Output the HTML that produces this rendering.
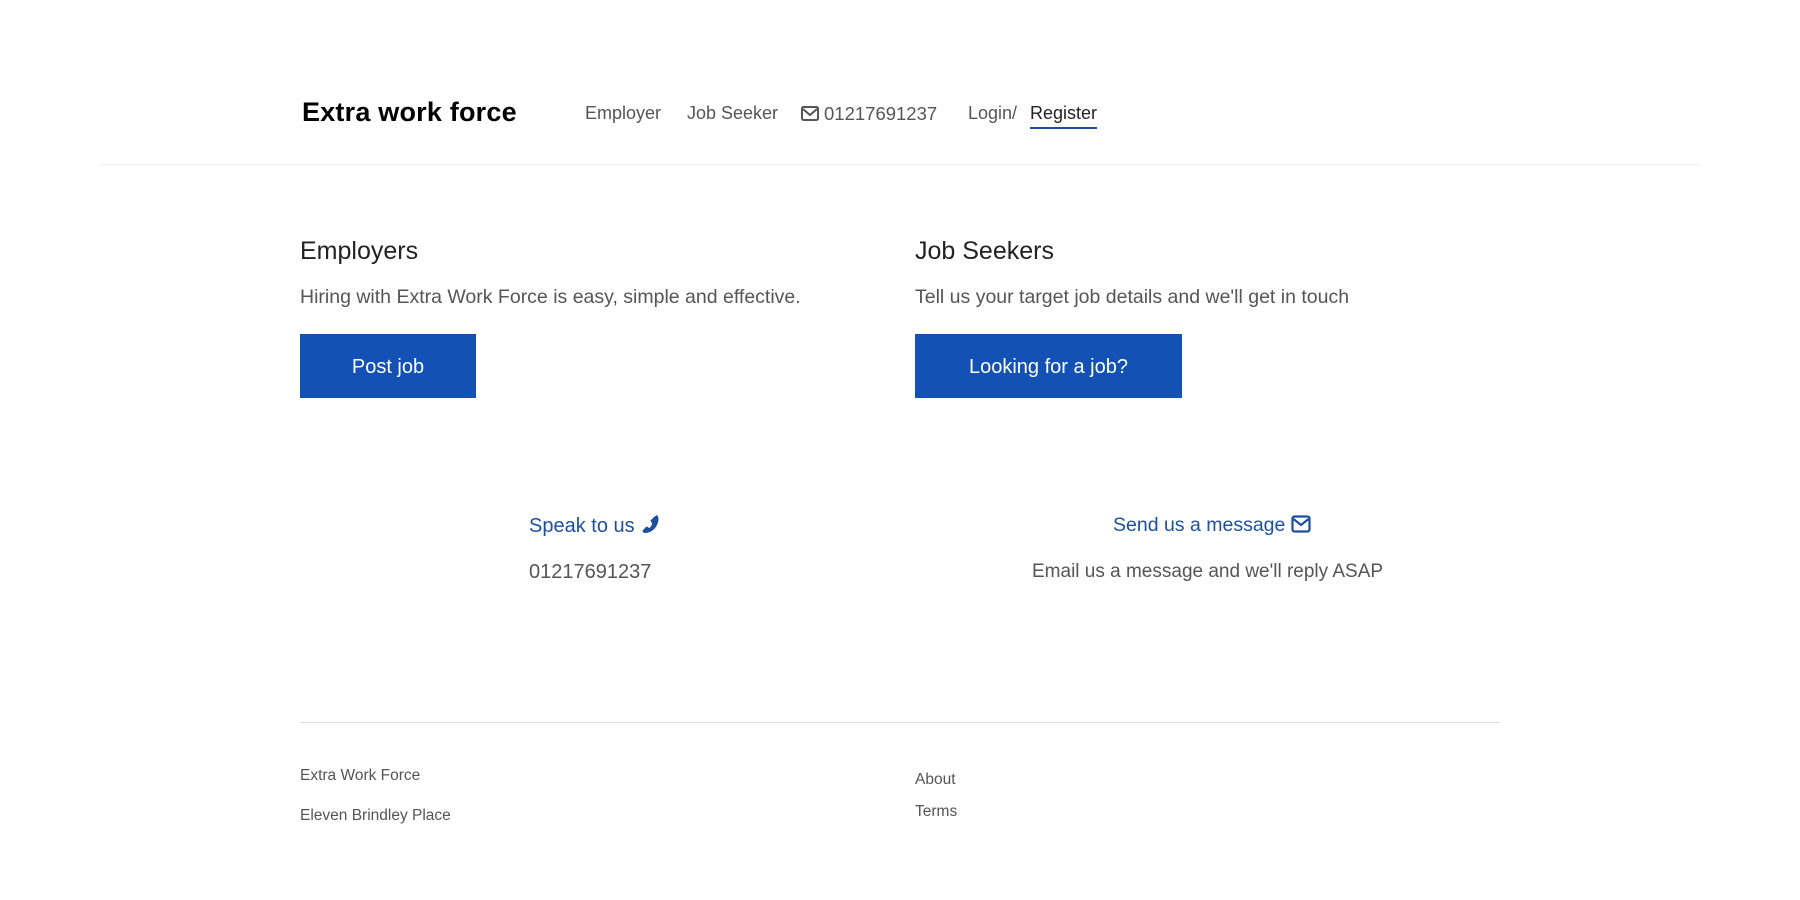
<!DOCTYPE html>
<html><head><meta charset="utf-8"><style>
body{margin:0;width:1800px;height:900px;background:#fff;font-family:"Liberation Sans",sans-serif;position:relative;overflow:hidden;color:#555}
.a{position:absolute;white-space:nowrap}
.logo{left:302px;top:97px;font-size:27px;font-weight:bold;color:#000;letter-spacing:0.2px}
.nav{top:103px;font-size:18px;color:#555}
.btn{position:absolute;top:334px;height:64px;background:#1351b4;color:#fff;font-size:20px;display:flex;align-items:center;justify-content:center;padding-top:3px;box-sizing:border-box}
h2{position:absolute;margin:0;font-weight:normal;font-size:25px;color:#222;top:237px}
.p{top:286px;font-size:19.5px;color:#555}
.link{color:#1d4f9e;font-size:20px;top:514px}
.ft{font-size:15.5px;color:#555}
</style></head><body>
<div class="a logo">Extra work force</div>
<div class="a nav" style="left:585px">Employer</div>
<div class="a nav" style="left:687px">Job Seeker</div>
<svg class="a" style="left:801px;top:106px" width="18" height="15" viewBox="0 0 18 15"><rect x="1" y="1" width="16" height="13" rx="1.5" fill="none" stroke="#555" stroke-width="2"/><path d="M2 3 L9 9 L16 3" fill="none" stroke="#555" stroke-width="2"/></svg>
<div class="a nav" style="left:824px;font-size:18.5px">01217691237</div>
<div class="a nav" style="left:968px">Login/</div>
<div class="a nav" style="left:1030px;color:#222">Register</div>
<div class="a" style="left:1030px;top:127px;width:67px;height:2px;background:#1d4f9e"></div>
<div class="a" style="left:100px;top:164px;width:1600px;height:1px;background:#eee"></div>

<h2 style="left:300px">Employers</h2>
<h2 style="left:915px">Job Seekers</h2>
<div class="a p" style="left:300px">Hiring with Extra Work Force is easy, simple and effective.</div>
<div class="a p" style="left:915px">Tell us your target job details and we'll get in touch</div>
<div class="btn" style="left:300px;width:176px">Post job</div>
<div class="btn" style="left:915px;width:267px">Looking for a job?</div>

<div class="a link" style="left:529px">Speak to us <svg width="20" height="20" viewBox="0 0 20 20" style="vertical-align:-2px"><path d="M17 1 C19 3 19 7 17 11 C14 17 9 19 5 19 C3 19 2 17 3 16 L6 13 C7 12 8 13 9 14 C11 13 12 11 12 9 C11 8 10 7 11 6 L14 3 Z" fill="#1d4f9e"/></svg></div>
<div class="a" style="left:529px;top:561px;font-size:20px;color:#555">01217691237</div>
<div class="a link" style="left:1113px;font-size:19.5px">Send us a message <svg width="20" height="18" viewBox="0 0 20 18" style="vertical-align:-2px"><rect x="1.5" y="1.5" width="17" height="15" rx="2" fill="none" stroke="#1d4f9e" stroke-width="2.2"/><path d="M2.5 4 L10 10 L17.5 4" fill="none" stroke="#1d4f9e" stroke-width="2.2"/></svg></div>
<div class="a" style="left:1032px;top:561px;font-size:19px;color:#555">Email us a message and we'll reply ASAP</div>

<div class="a" style="left:300px;top:722px;width:1200px;height:1px;background:#ddd"></div>
<div class="a ft" style="left:300px;top:767px">Extra Work Force</div>
<div class="a ft" style="left:300px;top:807px">Eleven Brindley Place</div>
<div class="a ft" style="left:915px;top:771px">About</div>
<div class="a ft" style="left:915px;top:803px">Terms</div>
</body></html>
